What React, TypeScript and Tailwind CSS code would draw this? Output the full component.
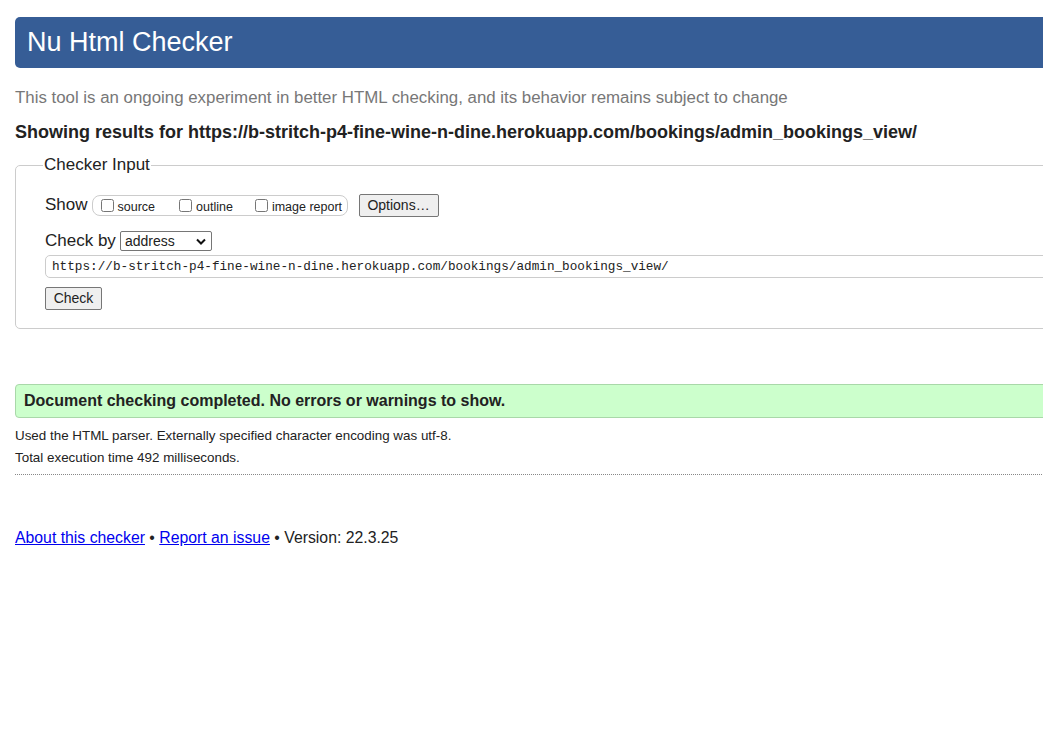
import React from "react";

const Checkbox: React.FC<{ label: string; className?: string }> = ({ label, className }) => (
  <label className={`flex items-center ${className ?? ""}`}>
    <input type="checkbox" className="w-[13px] h-[13px] m-0 mr-[4px]" />
    <span className="text-[12.5px] leading-[16px] mt-[3px]">{label}</span>
  </label>
);

export default function App() {
  return (
    <div className="w-[1043px] h-[733px] overflow-hidden bg-white text-[#222] font-['Liberation_Sans',Arial,sans-serif]">
      <div className="w-[1140px] pl-[15px] pt-[17px]">
        <header className="h-[51px] bg-[#365d96] rounded-[5px] flex items-center pl-[12px] text-white text-[27px]">
          Nu Html Checker
        </header>

        <p className="mt-[20px] text-[#777] text-[16.85px] leading-[20px]">
          This tool is an ongoing experiment in better HTML checking, and its behavior remains subject to change
        </p>
        <p className="mt-[14px] font-bold text-[18px] leading-[20px]">
          Showing results for https://b-stritch-p4-fine-wine-n-dine.herokuapp.com/bookings/admin_bookings_view/
        </p>

        <fieldset className="mt-[13px] border border-[#ccc] rounded-[5px] pl-[29px] pb-[18px]">
          <legend className="ml-[-2px] px-[1px] text-[17px] leading-[20px]">Checker Input</legend>

          <div className="mt-[18px] flex items-center h-[24px]">
            <span className="text-[17px] mr-[4px]">Show</span>
            <div className="flex items-center h-[21px] w-[256px] border border-[#ccc] rounded-[8px] pl-[8px]">
              <Checkbox label="source" />
              <Checkbox label="outline" className="ml-[24px]" />
              <Checkbox label="image report" className="ml-[22px]" />
            </div>
            <button className="ml-[11px] h-[23px] w-[80px] bg-[#efefef] border border-[#767676] rounded-[2px] text-[14px]">
              Options…
            </button>
          </div>

          <div className="mt-[14px] flex items-center h-[20px]">
            <span className="text-[17px] mr-[4px]">Check by</span>
            <div className="h-[20px] w-[92px] border border-[#767676] rounded-[2px] flex items-center justify-between pl-[4px] pr-[5px] text-[14px]">
              <span>address</span>
              <svg width="10" height="7" viewBox="0 0 10 7" fill="none">
                <path d="M1 1.5 L5 5.5 L9 1.5" stroke="#111" strokeWidth="2" />
              </svg>
            </div>
          </div>

          <div className="mt-[4px] h-[23px] border border-[#ccc] rounded-[5px] flex items-center pl-[6px] font-['Liberation_Mono',monospace] text-[12.7px]">
            https://b-stritch-p4-fine-wine-n-dine.herokuapp.com/bookings/admin_bookings_view/
          </div>

          <button className="mt-[9px] h-[23px] w-[57px] bg-[#efefef] border border-[#767676] rounded-[2px] text-[14px] block">
            Check
          </button>
        </fieldset>

        <div className="mt-[55px] h-[34px] bg-[#ccffcc] border border-[#a9d8a9] rounded-[4px] flex items-center pl-[8px] font-bold text-[16px]">
          Document checking completed. No errors or warnings to show.
        </div>

        <p className="mt-[10px] text-[13.4px] leading-[16px]">
          Used the HTML parser. Externally specified character encoding was utf-8.
        </p>
        <p className="mt-[6px] text-[13.4px] leading-[16px]">Total execution time 492 milliseconds.</p>
        <div className="mt-[8px] border-t border-dotted border-[#888]" />

        <p className="mt-[53px] text-[15.8px] leading-[20px]">
          <a className="text-[#0000ee] underline" href="#">About this checker</a>
          {" • "}
          <a className="text-[#0000ee] underline" href="#">Report an issue</a>
          {" • Version: 22.3.25"}
        </p>
      </div>
    </div>
  );
}
